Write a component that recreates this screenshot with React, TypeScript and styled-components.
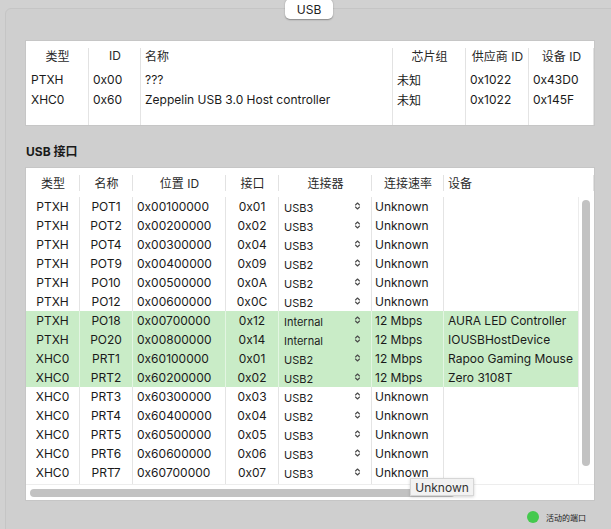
import React from "react";
import styled, { createGlobalStyle } from "styled-components";

const Global = createGlobalStyle`
  html, body { margin: 0; padding: 0; background: #d1d1d1; }
  * { box-sizing: border-box; }
`;

const FONT = `Inter, "Noto Sans CJK SC", sans-serif`;

const Window = styled.div`
  position: relative;
  width: 611px;
  height: 529px;
  overflow: hidden;
  background: #d1d1d1;
  padding: 8px 0 0 5px;
  font-family: ${FONT};
  color: #1a1a1a;
`;

const TabButton = styled.div`
  position: absolute;
  left: 285px;
  top: -1px;
  width: 48px;
  height: 20px;
  border-radius: 5px;
  background: #ffffff;
  box-shadow: 0 0.5px 1.5px rgba(0, 0, 0, 0.35);
  display: flex;
  align-items: center;
  justify-content: center;
  font-size: 12px;
  color: #222;
`;

const GroupBox = styled.div`
  width: 620px;
  height: 540px;
  border: 1px solid #c5c5c5;
  border-radius: 6px;
  background: #cfcfcf;
  padding: 32px 0 0 20px;
  display: flex;
  flex-direction: column;
`;

const TablePanel = styled.div<{ $h: number }>`
  width: 568px;
  height: ${(p) => p.$h}px;
  background: #ffffff;
  box-shadow: 0 0 0 1px rgba(0, 0, 0, 0.04);
  display: flex;
  flex-direction: column;
  overflow: hidden;
`;

const ControllerGrid = styled.div`
  display: grid;
  grid-template-columns: 63px 52px 252px 73px 63px 1fr;
  grid-template-rows: 28px 20px 20px 1fr;
  height: 100%;
`;

type Align = "left" | "center";

const HeadCell = styled.div<{ $align?: Align; $line?: boolean; $inset?: number }>`
  position: relative;
  display: flex;
  align-items: center;
  justify-content: ${(p) => (p.$align === "left" ? "flex-start" : "center")};
  padding: ${(p) => (p.$align === "left" ? "0 4px" : "0")};
  font-size: 12px;
  color: #2a2a2a;
  white-space: nowrap;
  &::after {
    content: "";
    display: ${(p) => (p.$line === false ? "none" : "block")};
    position: absolute;
    right: 0;
    top: ${(p) => p.$inset ?? 7}px;
    bottom: ${(p) => (p.$inset === undefined ? 0 : 6)}px;
    width: 1px;
    background: #e2e2e2;
  }
`;

const Cell = styled.div<{ $align?: Align; $line?: boolean; $active?: boolean; $pad?: number }>`
  display: flex;
  align-items: center;
  justify-content: ${(p) => (p.$align === "center" ? "center" : "flex-start")};
  padding-left: ${(p) => (p.$align === "center" ? 0 : p.$pad ?? 4)}px;
  font-size: 12px;
  white-space: nowrap;
  overflow: hidden;
  background: ${(p) => (p.$active ? "#c9ecc7" : "transparent")};
  border-right: 1px solid
    ${(p) => (p.$line === false ? "transparent" : p.$active ? "#e3f5e2" : "#e4e4e4")};
`;

const SectionLabel = styled.div`
  margin-top: 19px;
  height: 16px;
  line-height: 16px;
  font-size: 12px;
  font-weight: 700;
  color: #1a1a1a;
`;

const PortsPanel = styled(TablePanel)`
  margin-top: 8px;
`;

const PortCols = `54px 53px 93px 53px 93px 72px 1fr`;

const PortHeader = styled.div`
  display: grid;
  grid-template-columns: ${PortCols};
  height: 29px;
  flex: none;
`;

const PortBodyWrap = styled.div`
  display: flex;
  height: 287px;
  flex: none;
`;

const PortRows = styled.div`
  width: 552px;
  display: flex;
  flex-direction: column;
`;

const PortRow = styled.div`
  display: grid;
  grid-template-columns: ${PortCols};
  height: 19px;
  flex: none;
`;

const Filler = styled(PortRow)`
  flex: 1;
  height: auto;
`;

const VTrack = styled.div`
  width: 16px;
  border-left: 1px solid #ececec;
  padding: 3px 0 0 3px;
`;

const VThumb = styled.div`
  width: 8px;
  height: 266px;
  border-radius: 4px;
  background: #c2c2c2;
`;

const HTrack = styled.div`
  flex: 1;
  border-top: 1px solid #ededed;
  padding: 4px 0 0 4px;
`;

const HThumb = styled.div`
  width: 425px;
  height: 8px;
  border-radius: 4px;
  background: #c2c2c2;
`;

const ConnText = styled.span`
  font-size: 11px;
  padding-top: 3px;
  flex: 1;
  color: #1d1d1d;
`;

const Stepper = styled.svg`
  flex: none;
  margin-right: 10px;
  margin-top: -1px;
`;

const Legend = styled.div`
  width: 568px;
  margin-top: 11px;
  display: flex;
  justify-content: flex-end;
  align-items: center;
  gap: 7px;
  padding-right: 8px;
`;

const Dot = styled.span`
  width: 12px;
  height: 12px;
  border-radius: 50%;
  background: #45c94e;
`;

const LegendText = styled.span`
  font-size: 8px;
  color: #222;
`;

const Tooltip = styled.div`
  position: absolute;
  left: 410px;
  top: 478px;
  width: 64px;
  height: 18px;
  background: #f2f2f2;
  border: 1px solid #d6d6d6;
  box-shadow: 0 1px 3px rgba(0, 0, 0, 0.18);
  display: flex;
  align-items: center;
  justify-content: center;
  font-size: 12px;
  color: #333;
`;

const controllers = [
  ["PTXH", "0x00", "???", "未知", "0x1022", "0x43D0"],
  ["XHC0", "0x60", "Zeppelin USB 3.0 Host controller", "未知", "0x1022", "0x145F"],
];

type Port = [string, string, string, string, string, string, string, boolean];

const ports: Port[] = [
  ["PTXH", "POT1", "0x00100000", "0x01", "USB3", "Unknown", "", false],
  ["PTXH", "POT2", "0x00200000", "0x02", "USB3", "Unknown", "", false],
  ["PTXH", "POT4", "0x00300000", "0x04", "USB3", "Unknown", "", false],
  ["PTXH", "POT9", "0x00400000", "0x09", "USB2", "Unknown", "", false],
  ["PTXH", "PO10", "0x00500000", "0x0A", "USB2", "Unknown", "", false],
  ["PTXH", "PO12", "0x00600000", "0x0C", "USB2", "Unknown", "", false],
  ["PTXH", "PO18", "0x00700000", "0x12", "Internal", "12 Mbps", "AURA LED Controller", true],
  ["PTXH", "PO20", "0x00800000", "0x14", "Internal", "12 Mbps", "IOUSBHostDevice", true],
  ["XHC0", "PRT1", "0x60100000", "0x01", "USB2", "12 Mbps", "Rapoo Gaming Mouse", true],
  ["XHC0", "PRT2", "0x60200000", "0x02", "USB2", "12 Mbps", "Zero 3108T", true],
  ["XHC0", "PRT3", "0x60300000", "0x03", "USB2", "Unknown", "", false],
  ["XHC0", "PRT4", "0x60400000", "0x04", "USB2", "Unknown", "", false],
  ["XHC0", "PRT5", "0x60500000", "0x05", "USB3", "Unknown", "", false],
  ["XHC0", "PRT6", "0x60600000", "0x06", "USB3", "Unknown", "", false],
  ["XHC0", "PRT7", "0x60700000", "0x07", "USB3", "Unknown", "", false],
];

const StepperIcon = () => (
  <Stepper width="7" height="10" viewBox="0 0 7 10">
    <path d="M1.5 4 L3.5 2 L5.5 4 M1.5 6 L3.5 8 L5.5 6" fill="none" stroke="#4a4a4a" strokeWidth="1.1" strokeLinecap="round" strokeLinejoin="round" />
  </Stepper>
);

const ctrlHeads: [string, Align][] = [
  ["类型", "center"],
  ["ID", "center"],
  ["名称", "left"],
  ["芯片组", "center"],
  ["供应商 ID", "center"],
  ["设备 ID", "center"],
];

const portHeads: [string, Align][] = [
  ["类型", "center"],
  ["名称", "center"],
  ["位置 ID", "center"],
  ["接口", "center"],
  ["连接器", "center"],
  ["连接速率", "center"],
  ["设备", "left"],
];

const portAlign: Align[] = ["center", "center", "left", "center", "left", "left", "left"];

export default function App() {
  return (
    <>
      <Global />
      <Window>
        <GroupBox>
          <TablePanel $h={84}>
            <ControllerGrid>
              {ctrlHeads.map(([t, a]) => (
                <HeadCell key={t} $align={a}>
                  {t}
                </HeadCell>
              ))}
              {controllers.map((r, ri) =>
                r.map((v, ci) => (
                  <Cell key={`${ri}-${ci}`} $pad={ci === 0 ? 5 : 4}>
                    {v}
                  </Cell>
                ))
              )}
              {ctrlHeads.map(([t]) => (
                <Cell key={`f-${t}`} />
              ))}
            </ControllerGrid>
          </TablePanel>

          <SectionLabel>USB 接口</SectionLabel>

          <PortsPanel $h={332}>
            <PortHeader>
              {portHeads.map(([t, a]) => (
                <HeadCell key={t} $align={a} $inset={7}>
                  {t}
                </HeadCell>
              ))}
            </PortHeader>
            <PortBodyWrap>
              <PortRows>
                {ports.map((r) => (
                  <PortRow key={r[1] + r[0]}>
                    {r.slice(0, 7).map((v, ci) => (
                      <Cell
                        key={ci}
                        $align={portAlign[ci]}
                        $active={r[7]}
                        $line={ci !== 6}
                        $pad={ci === 4 ? 5 : ci === 5 ? 3 : 4}
                      >
                        {ci === 4 ? (
                          <>
                            <ConnText>{v}</ConnText>
                            <StepperIcon />
                          </>
                        ) : (
                          v
                        )}
                      </Cell>
                    ))}
                  </PortRow>
                ))}
                <Filler>
                  {portHeads.map(([t], ci) => (
                    <Cell key={t} $line={ci !== 6} />
                  ))}
                </Filler>
              </PortRows>
              <VTrack>
                <VThumb />
              </VTrack>
            </PortBodyWrap>
            <HTrack>
              <HThumb />
            </HTrack>
          </PortsPanel>

          <Legend>
            <Dot />
            <LegendText>活动的端口</LegendText>
          </Legend>
        </GroupBox>
        <TabButton>USB</TabButton>
        <Tooltip>Unknown</Tooltip>
      </Window>
    </>
  );
}
